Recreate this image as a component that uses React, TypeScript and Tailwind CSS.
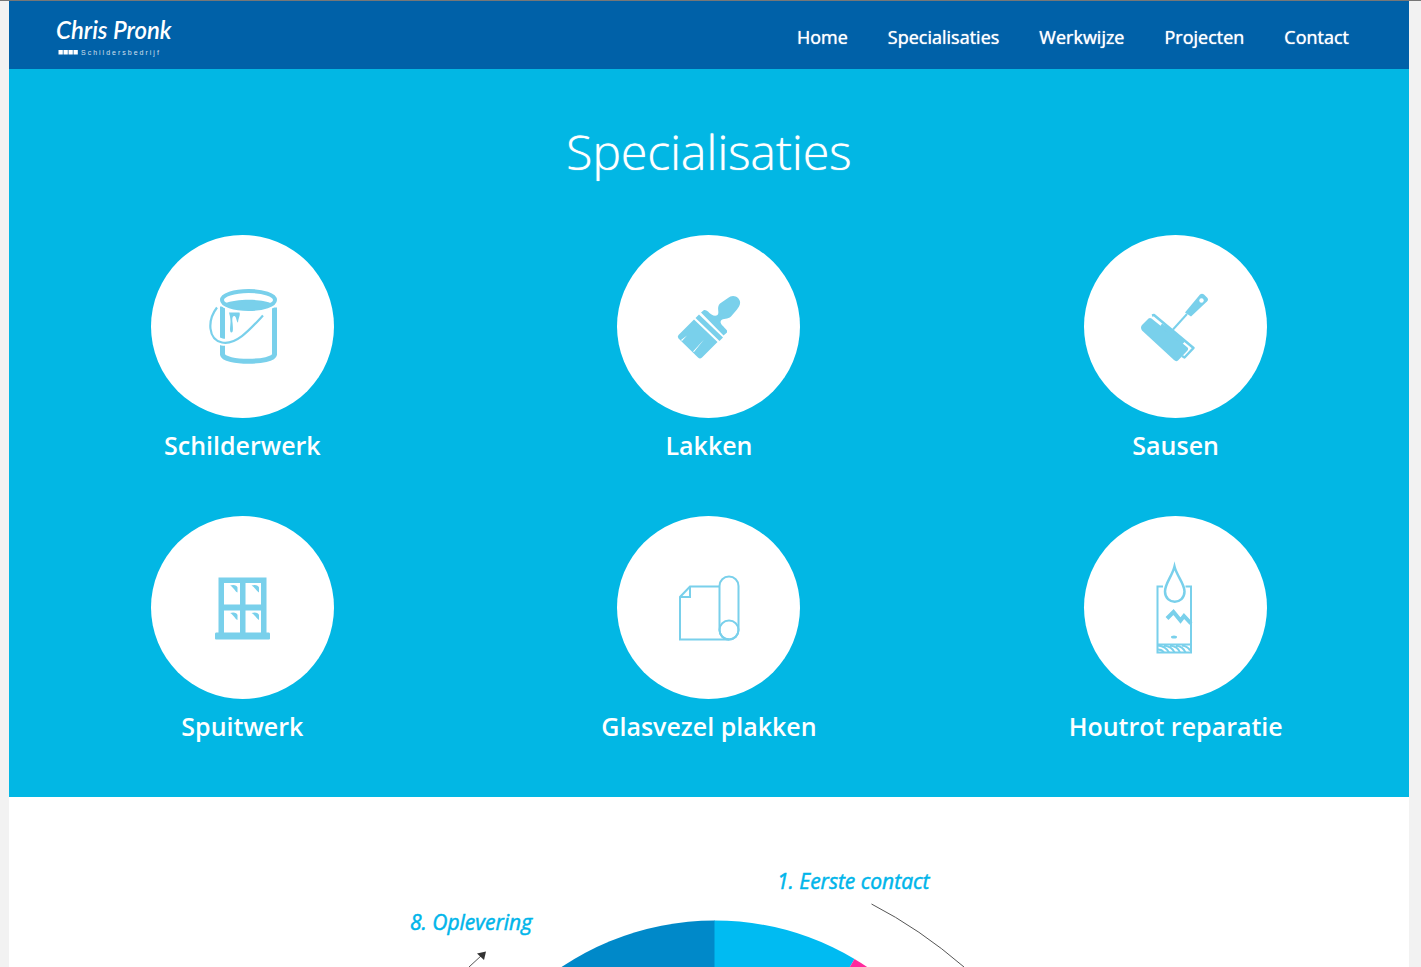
import type { ReactNode } from "react";

const navItems = ["Home", "Specialisaties", "Werkwijze", "Projecten", "Contact"];

function BucketIcon() {
  return (
    <svg viewBox="190 271.5 110 110" className="size-[110px]" fill="none" stroke="currentColor" aria-hidden="true">
      <path d="M222.500 306V354C224 363 273 363 274.500 354V307" strokeWidth="5" />
      <ellipse cx="248.500" cy="299.500" rx="29" ry="11.500" fill="#fff" stroke="#fff" strokeWidth="3" />
      <ellipse cx="248.500" cy="299.500" rx="26.500" ry="9" strokeWidth="4" />
      <path d="M225 303C236 298 262 298 272 303C264 310 233 310 225 303Z" fill="currentColor" stroke="none" />
      <path d="M217 308C207 320 208 339 222 341.500C236 344 250 329 263 315" stroke="#fff" strokeWidth="7" />
      <path d="M222.500 308V334" strokeWidth="5" />
      <path d="M217 307C207 320 208 339 222 342C236 345 250 329 263 315" strokeWidth="2.200" />
      <path d="M229 312H239.500C240.500 315 238.500 317 238 322C236.500 322 236.500 316 234.500 315.500C232.500 315 232 318 232.500 322C233 327 233.500 332 231.500 332C229 332 230.500 325 230.500 321C230.500 317 229.500 314 229 312Z" fill="currentColor" stroke="none" />
    </svg>
  );
}

function BrushIcon() {
  return (
    <svg viewBox="660 276.5 100 100" className="size-[100px]" fill="currentColor" aria-hidden="true">
      <path d="M678.500 334.500L694 319L717.500 341.500L702 357Q700 359 698 357L678.500 338Q677 336 678.500 334.500Z" />
      <path d="M695.500 317.500L699 314L723 337L719.500 340.500Z" />
      <path d="M701 312L704 309.500Q706 309 708 311C711 314.500 715 316.500 717.500 314.500C720 312 716 307 720 303L728 297.500C731 295 735 294.500 738.500 298C741.500 302 740 305 737 309L731 316C728 319 723 317.500 721 320C719 323 724 326 727 330L727 332L723.500 335Z" />
      <path d="M681 339.500L687 335L682 340.500ZM693 351L704 339L694 351.500Z" fill="#fff" />
    </svg>
  );
}

function RollerIcon() {
  return (
    <svg viewBox="1126 276.5 100 100" className="size-[100px]" fill="currentColor" aria-hidden="true">
      <path d="M1142 324.500L1148.500 318Q1150 317 1151.500 318L1187 346.500Q1189 348 1187.500 350L1178 360Q1176 361.500 1174 359.500L1142 330Q1140 327 1142 324.500Z" />
      <path d="M1152 315L1154 314.500L1193.500 347.500L1184.500 357L1182 355.500" fill="none" stroke="currentColor" strokeWidth="2.500" strokeLinejoin="round" />
      <path d="M1162 323L1174 331L1185 341L1182 344L1160 326Z" />
      <path d="M1173 329L1187 313.500" stroke="currentColor" strokeWidth="2" />
      <path d="M1185 312L1200 294Q1202 292.500 1204 294L1207 297Q1209 299 1207 301L1191 316Z" />
      <circle cx="1201.500" cy="300" r="2.200" fill="#fff" />
    </svg>
  );
}

function WindowIcon() {
  return (
    <svg viewBox="200 562.5 90 90" className="size-[90px]" fill="currentColor" aria-hidden="true">
      <path fillRule="evenodd" d="M218.500 577H266.500V632H269Q270 632 270 633.500V638Q270 639 269 639H216Q215 639 215 638V633.500Q215 632 216 632H218.500ZM224 582.500V604H240V582.500ZM245.500 582.500V604H261V582.500ZM224 610V632H240V610ZM245.500 610V632H261V610Z" />
      <path d="M230 585C234 583.500 237 585 237.500 587V592C235 591 233 586 230 585ZM251.500 585C255.500 583.500 258.500 585 259 587V592C256.500 591 254.500 586 251.500 585ZM230 612.500C234 611 237 612.500 237.500 614.500V619.500C235 618.500 233 613.500 230 612.500ZM251.500 612.500C255.500 611 258.500 612.500 259 614.500V619.500C256.500 618.500 254.500 613.500 251.500 612.500Z" />
    </svg>
  );
}

function GlassFibreIcon() {
  return (
    <svg viewBox="665 562.5 90 90" className="size-[90px]" fill="none" stroke="currentColor" strokeWidth="2" aria-hidden="true">
      <path d="M719.500 586H690L680 596.500V639H729M690 586.500V596.500H680" />
      <rect x="719.500" y="576" width="19" height="63" rx="9.500" />
      <circle cx="729" cy="629.500" r="9.500" />
    </svg>
  );
}

function WoodRotIcon() {
  return (
    <svg viewBox="1131 552.5 90 110" className="h-[110px] w-[90px]" fill="none" stroke="currentColor" aria-hidden="true">
      <path d="M1163 586H1157.500V652H1191V586H1185.500M1157 644H1191" strokeWidth="2" />
      <path d="M1174.500 566C1172 576 1165 583 1165 591C1165 604.500 1184.500 604.500 1184.500 591C1184.500 583 1177 576 1174.500 566Z" strokeWidth="2.500" strokeMiterlimit="10" />
      <path d="M1167 618L1173.500 611.500L1180.500 620L1184 615.500L1191 623" strokeWidth="4" />
      <ellipse cx="1174" cy="636.500" rx="3" ry="1.500" fill="currentColor" stroke="none" />
      <path d="M1158 649Q1162 649 1164 652M1158 645Q1166 646 1169 652M1164 645Q1172 646 1174.500 652M1170 645Q1178 646 1180 652M1176 645Q1183 646 1185.500 652M1182 645Q1188 646 1190 650" strokeWidth="2" />
    </svg>
  );
}

const specialities: { label: string; icon: ReactNode; align: string }[] = [
  { label: "Schilderwerk", icon: <BucketIcon />, align: "pl-[5px]" },
  { label: "Lakken", icon: <BrushIcon />, align: "pl-[3px]" },
  { label: "Sausen", icon: <RollerIcon />, align: "pl-[1px]" },
  { label: "Spuitwerk", icon: <WindowIcon />, align: "pl-[5px]" },
  { label: "Glasvezel plakken", icon: <GlassFibreIcon />, align: "pl-[3px]" },
  { label: "Houtrot reparatie", icon: <WoodRotIcon />, align: "pl-[1px]" },
];

function Logo() {
  return (
    <a href="#home" aria-label="Chris Pronk Schildersbedrijf" className="block text-white">
      <svg width="124" height="46" viewBox="52 11 124 46" aria-hidden="true" fill="currentColor">
        <text x="56" y="38" fontSize="24" fontStyle="italic" fontWeight="600" fontFamily="Lato, cursive">Chris Pronk</text>
        <path d="M58.500 49h4.300v4.500h-4.300zM63.500 49h4.300v4.500h-4.300zM68.500 49h4.300v4.500h-4.300zM73.500 49h4.300v4.500h-4.300z" />
        <text x="81" y="54" fontSize="7" letterSpacing="2" fontFamily="'Liberation Sans', sans-serif" opacity=".8">Schildersbedrijf</text>
      </svg>
    </a>
  );
}

function ProcessWheel() {
  return (
    <svg width="600" height="120" viewBox="409 847 600 120" className="block" role="img" aria-label="Werkwijze">
      <path d="M715 1195V920.500A274.500 274.500 0 0 0 440 1195Z" fill="#0089c9" />
      <path d="M714.500 1195V920.500A274.500 274.500 0 0 1 854.500 959Z" fill="#00bbf2" />
      <path d="M714.500 1195L854.500 959A274.500 274.500 0 0 1 989 1195Z" fill="#ff2a9d" />
      <path d="M871.500 904Q920 929 964 967M469 967L482 955" fill="none" stroke="#555" />
      <path d="M486 951.500L477 953.500L484 960Z" fill="#333" />
      <g fill="#00b5ea" stroke="#00b5ea" strokeWidth=".5" fontFamily="'Open Sans', sans-serif" fontStyle="italic" fontSize="21">
        <text x="777" y="889">1. Eerste contact</text>
        <text x="410" y="930">8. Oplevering</text>
      </g>
    </svg>
  );
}

export default function App() {
  return (
    <div className="h-screen overflow-hidden border-t border-[#777] bg-[#f2f2f2] pr-3 pl-[9px] font-['Open_Sans',sans-serif]">
      <div className="min-h-full bg-white">
        <header className="flex h-[68px] items-center justify-between bg-[#0061a8] pr-[60px] pl-[43px]">
          <Logo />
          <nav className="flex gap-10 text-lg text-white [text-shadow:0_0_1px_#fff]" aria-label="Hoofdmenu">
            {navItems.map((item) => (
              <a key={item} href={`#${item.toLowerCase()}`} className="pt-1">{item}</a>
            ))}
          </nav>
        </header>

        <section id="specialisaties" className="bg-[#02b7e4] pt-12 pb-[52px] text-white">
          <h1 className="text-center text-5xl leading-[70px] font-light [text-shadow:0_0_1px_#fff]">Specialisaties</h1>
          <div className="mt-12 grid grid-cols-3 gap-y-[52px]">
            {specialities.map(({ label, icon, align }) => (
              <article key={label} className="flex flex-col items-center">
                <div className={`flex size-[183px] items-center justify-center rounded-full bg-white text-[#79d0eb] ${align}`}>{icon}</div>
                <h2 className="mt-2 text-[25px] leading-[38px] font-semibold">{label}</h2>
              </article>
            ))}
          </div>
        </section>

        <section id="werkwijze" className="flex justify-center pt-[50px]">
          <ProcessWheel />
        </section>
      </div>
    </div>
  );
}
